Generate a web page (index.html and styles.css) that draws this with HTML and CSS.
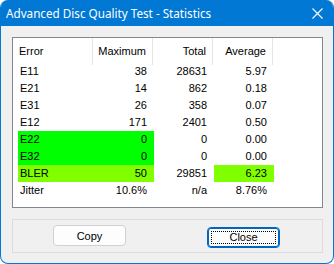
FILE: index.html
```html
<!DOCTYPE html>
<html lang="en">
<head>
  <meta charset="UTF-8">
  <title>Advanced Disc Quality Test - Statistics</title>
  <link rel="stylesheet" href="styles.css">
</head>
<body>
  <div class="window">
    <div class="titlebar">
      <span class="title">Advanced Disc Quality Test - Statistics</span>
      <svg class="close-x" width="11" height="11" viewBox="0 0 11 11">
        <path d="M0.5 0.5 L10.5 10.5 M10.5 0.5 L0.5 10.5" stroke="#fff" stroke-width="1.1" fill="none"/>
      </svg>
    </div>

    <div class="content">
      <div class="list">
        <div class="head">
          <div class="hcell first">Error</div>
          <div class="hcell">Maximum</div>
          <div class="hcell">Total</div>
          <div class="hcell">Average</div>
        </div>

        <div class="row"><div class="cell first">E11</div><div class="cell">38</div><div class="cell">28631</div><div class="cell">5.97</div></div>
        <div class="row"><div class="cell first">E21</div><div class="cell">14</div><div class="cell">862</div><div class="cell">0.18</div></div>
        <div class="row"><div class="cell first">E31</div><div class="cell">26</div><div class="cell">358</div><div class="cell">0.07</div></div>
        <div class="row"><div class="cell first">E12</div><div class="cell">171</div><div class="cell">2401</div><div class="cell">0.50</div></div>
        <div class="row"><div class="cell first green">E22</div><div class="cell green">0</div><div class="cell">0</div><div class="cell">0.00</div></div>
        <div class="row"><div class="cell first green">E32</div><div class="cell green">0</div><div class="cell">0</div><div class="cell">0.00</div></div>
        <div class="row"><div class="cell first lime">BLER</div><div class="cell lime">50</div><div class="cell">29851</div><div class="cell lime">6.23</div></div>
        <div class="row"><div class="cell first">Jitter</div><div class="cell">10.6%</div><div class="cell">n/a</div><div class="cell">8.76%</div></div>
      </div>

      <div class="buttons">
        <button type="button" class="btn copy">Copy</button>
        <button type="button" class="btn close"><span class="focus">Close</span></button>
      </div>
    </div>
  </div>
</body>
</html>
```

FILE: styles.css
```css
body {
  margin: 0;
  background: #ffffff;
  font-family: "Liberation Sans", Arial, sans-serif;
  font-size: 11px;
  color: #000;
}
.window {
  width: 334px;
  height: 264px;
  box-sizing: border-box;
  border: 1px solid #0078d4;
  border-top: none;
  border-radius: 8px;
  background: #f0f0f0;
  overflow: hidden;
}
.titlebar {
  height: 26px;
  background: #0078d4;
  color: #fff;
  display: flex;
  align-items: center;
  justify-content: space-between;
  padding: 0 10px 0 5px;
}
.title {
  font-family: "Noto Sans", sans-serif;
  font-size: 11.7px;
}
.close-x {
  display: block;
}
.content {
  padding: 11px 10px 0 11px;
}
.list {
  height: 171px;
  box-sizing: border-box;
  border: 1px solid #828790;
  background: #fff;
}
.head {
  display: grid;
  grid-template-columns: 80px 60px 60px 60px;
  height: 25px;
}
.hcell {
  border-right: 1px solid #e5e5e5;
  line-height: 27px;
  text-align: right;
  padding-right: 6px;
}
.hcell.first {
  text-align: left;
  padding-left: 6px;
}
.row {
  display: grid;
  grid-template-columns: 76px 60px 60px 60px;
  padding-left: 5px;
  height: 17px;
}
.cell {
  line-height: 17px;
  text-align: right;
  padding-right: 7px;
}
.cell.first {
  text-align: left;
  padding-left: 2px;
}
.green {
  background: #00ff00;
}
.lime {
  background: #80ff00;
}
.buttons {
  margin-top: 11px;
  height: 34px;
  box-sizing: border-box;
  border: 1px solid #dcdcdc;
  display: flex;
  align-items: flex-start;
}
.btn {
  width: 73px;
  height: 21px;
  box-sizing: border-box;
  border-radius: 4px;
  background: #fdfdfd;
  font-family: "Liberation Sans", Arial, sans-serif;
  font-size: 11px;
  color: #000;
  padding: 0;
}
.copy {
  margin: 5px 0 0 40px;
  border: 1px solid #d0d0d0;
}
.close {
  margin: 7px 0 0 81px;
  border: 1px solid #0067c0;
  box-shadow: inset 0 0 0 1px #0067c0;
  padding: 3px;
}
.focus {
  display: block;
  height: 100%;
  box-sizing: border-box;
  border: 1px dotted #000;
  line-height: 10px;
}
```
